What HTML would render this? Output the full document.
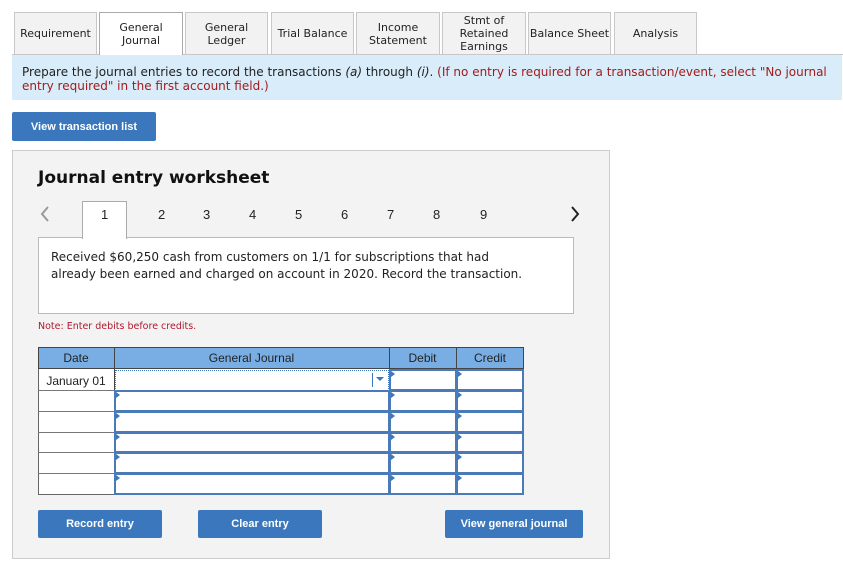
<!DOCTYPE html>
<html><head><style>
*{box-sizing:border-box;margin:0;padding:0}
body{width:843px;height:565px;background:#fff;position:relative;font-family:"DejaVu Sans","Liberation Sans",sans-serif;color:#222;overflow:hidden}
.a{position:absolute}
.tab{position:absolute;top:12px;height:42px;border:1px solid #c8c8c8;border-bottom:none;background:#f2f2f2;font-size:11px;display:flex;align-items:center;justify-content:center;text-align:center;line-height:13px}
.btn{position:absolute;background:#3a77bd;color:#fff;font-family:"Liberation Sans",sans-serif;font-weight:bold;font-size:11px;display:flex;align-items:center;justify-content:center;border-radius:2px}
.n{position:absolute;top:207px;font-family:"Liberation Sans",sans-serif;font-size:13px}
.c{position:absolute;background:#fff;border:2px solid #4a7ab8}
.m{position:absolute;width:0;height:0;border-top:3px solid transparent;border-bottom:3px solid transparent;border-left:4px solid #3a77bd}
</style></head><body>
<div class="a" style="left:12px;top:54px;width:831px;height:1px;background:#c8c8c8"></div>
<div class="tab" style="left:14px;width:83px">Requirement</div>
<div class="tab" style="left:99px;width:84px;background:#fff;border-color:#aaa;height:43px">General<br>Journal</div>
<div class="tab" style="left:185px;width:83px">General<br>Ledger</div>
<div class="tab" style="left:271px;width:83px">Trial Balance</div>
<div class="tab" style="left:356px;width:84px">Income<br>Statement</div>
<div class="tab" style="left:442px;width:84px">Stmt of<br>Retained<br>Earnings</div>
<div class="tab" style="left:528px;width:83px">Balance Sheet</div>
<div class="tab" style="left:614px;width:83px">Analysis</div>
<div class="a" style="left:12px;top:55px;width:830px;height:45px;background:#d9ecf9;font-size:12px;line-height:14px;padding:10px 0 0 10px;color:#222">Prepare the journal entries to record the transactions <i>(a)</i> through <i>(i)</i>. <span style="color:#a31b1b">(If no entry is required for a transaction/event, select "No journal entry required" in the first account field.)</span></div>
<div class="btn" style="left:12px;top:112px;width:144px;height:29px">View transaction list</div>
<div class="a" style="left:12px;top:150px;width:598px;height:409px;background:#f3f3f3;border:1px solid #ccc"></div>
<div class="a" style="left:38px;top:168px;font-size:17px;font-weight:bold;color:#111">Journal entry worksheet</div>
<svg class="a" style="left:40px;top:206px" width="10" height="16"><path d="M8 1 L2 8 L8 15" fill="none" stroke="#999" stroke-width="2"/></svg>
<svg class="a" style="left:570px;top:206px" width="10" height="16"><path d="M2 1 L8 8 L2 15" fill="none" stroke="#222" stroke-width="2"/></svg>
<div class="a" style="left:82px;top:201px;width:45px;height:38px;background:#fff;border:1px solid #aaa;border-bottom:none;z-index:2"></div>
<div class="n" style="left:101px;z-index:3">1</div>
<div class="n" style="left:158px">2</div><div class="n" style="left:203px">3</div><div class="n" style="left:249px">4</div><div class="n" style="left:295px">5</div><div class="n" style="left:341px">6</div><div class="n" style="left:387px">7</div><div class="n" style="left:433px">8</div><div class="n" style="left:480px">9</div>
<div class="a" style="left:38px;top:237px;width:536px;height:77px;background:#fff;border:1px solid #bbb;font-size:12px;line-height:17px;padding:11px 0 0 12px">Received $60,250 cash from customers on 1/1 for subscriptions that had<br>already been earned and charged on account in 2020. Record the transaction.</div>
<div class="a" style="left:38px;top:321px;font-size:9.5px;color:#b0182e">Note: Enter debits before credits.</div>
<div class="a" style="left:38px;top:347px;width:486px;height:148px;background:#fff;border:1px solid #666"></div>
<div class="a" style="left:38px;top:347px;width:486px;height:22px;background:#79aee4;border:1px solid #444;font-family:'Liberation Sans',sans-serif;font-size:12px"></div>
<div class="a" style="left:38px;top:351px;width:76px;text-align:center;font-family:'Liberation Sans',sans-serif;font-size:12px">Date</div>
<div class="a" style="left:114px;top:351px;width:275px;text-align:center;font-family:'Liberation Sans',sans-serif;font-size:12px">General Journal</div>
<div class="a" style="left:389px;top:351px;width:67px;text-align:center;font-family:'Liberation Sans',sans-serif;font-size:12px">Debit</div>
<div class="a" style="left:456px;top:351px;width:68px;text-align:center;font-family:'Liberation Sans',sans-serif;font-size:12px">Credit</div>
<div class="a" style="left:114px;top:347px;width:1px;height:148px;background:#444"></div>
<div class="a" style="left:389px;top:347px;width:1px;height:22px;background:#444"></div>
<div class="a" style="left:456px;top:347px;width:1px;height:22px;background:#444"></div>
<div class="a" style="left:38px;top:374px;width:76px;text-align:center;font-family:'Liberation Sans',sans-serif;font-size:12px">January 01</div>
<div class="a" style="left:38px;top:390px;width:76px;height:1px;background:#777"></div>
<div class="a" style="left:38px;top:411px;width:76px;height:1px;background:#777"></div>
<div class="a" style="left:38px;top:432px;width:76px;height:1px;background:#777"></div>
<div class="a" style="left:38px;top:452px;width:76px;height:1px;background:#777"></div>
<div class="a" style="left:38px;top:473px;width:76px;height:1px;background:#777"></div>
<div class="a" style="left:115px;top:370px;width:274px;height:21px;border:1px dotted #3a77bd;background:#fff"></div>
<div class="a" style="left:372px;top:373px;width:1px;height:14px;background:#3a77bd"></div>
<div class="a" style="left:376px;top:377px;width:0;height:0;border-left:4px solid transparent;border-right:4px solid transparent;border-top:4px solid #3a77bd"></div>
<div class="c" style="left:389px;top:369px;width:68px;height:22px"></div><div class="c" style="left:456px;top:369px;width:68px;height:22px"></div>
<div class="c" style="left:114px;top:390px;width:276px;height:22px"></div><div class="c" style="left:389px;top:390px;width:68px;height:22px"></div><div class="c" style="left:456px;top:390px;width:68px;height:22px"></div>
<div class="c" style="left:114px;top:411px;width:276px;height:22px"></div><div class="c" style="left:389px;top:411px;width:68px;height:22px"></div><div class="c" style="left:456px;top:411px;width:68px;height:22px"></div>
<div class="c" style="left:114px;top:432px;width:276px;height:21px"></div><div class="c" style="left:389px;top:432px;width:68px;height:21px"></div><div class="c" style="left:456px;top:432px;width:68px;height:21px"></div>
<div class="c" style="left:114px;top:452px;width:276px;height:22px"></div><div class="c" style="left:389px;top:452px;width:68px;height:22px"></div><div class="c" style="left:456px;top:452px;width:68px;height:22px"></div>
<div class="c" style="left:114px;top:473px;width:276px;height:22px"></div><div class="c" style="left:389px;top:473px;width:68px;height:22px"></div><div class="c" style="left:456px;top:473px;width:68px;height:22px"></div>
<div class="m" style="left:391px;top:371px"></div><div class="m" style="left:458px;top:371px"></div>
<div class="m" style="left:116px;top:392px"></div><div class="m" style="left:391px;top:392px"></div><div class="m" style="left:458px;top:392px"></div>
<div class="m" style="left:116px;top:413px"></div><div class="m" style="left:391px;top:413px"></div><div class="m" style="left:458px;top:413px"></div>
<div class="m" style="left:116px;top:434px"></div><div class="m" style="left:391px;top:434px"></div><div class="m" style="left:458px;top:434px"></div>
<div class="m" style="left:116px;top:454px"></div><div class="m" style="left:391px;top:454px"></div><div class="m" style="left:458px;top:454px"></div>
<div class="m" style="left:116px;top:475px"></div><div class="m" style="left:391px;top:475px"></div><div class="m" style="left:458px;top:475px"></div>
<div class="btn" style="left:38px;top:510px;width:124px;height:28px">Record entry</div>
<div class="btn" style="left:198px;top:510px;width:124px;height:28px">Clear entry</div>
<div class="btn" style="left:445px;top:510px;width:138px;height:28px">View general journal</div>
</body></html>
